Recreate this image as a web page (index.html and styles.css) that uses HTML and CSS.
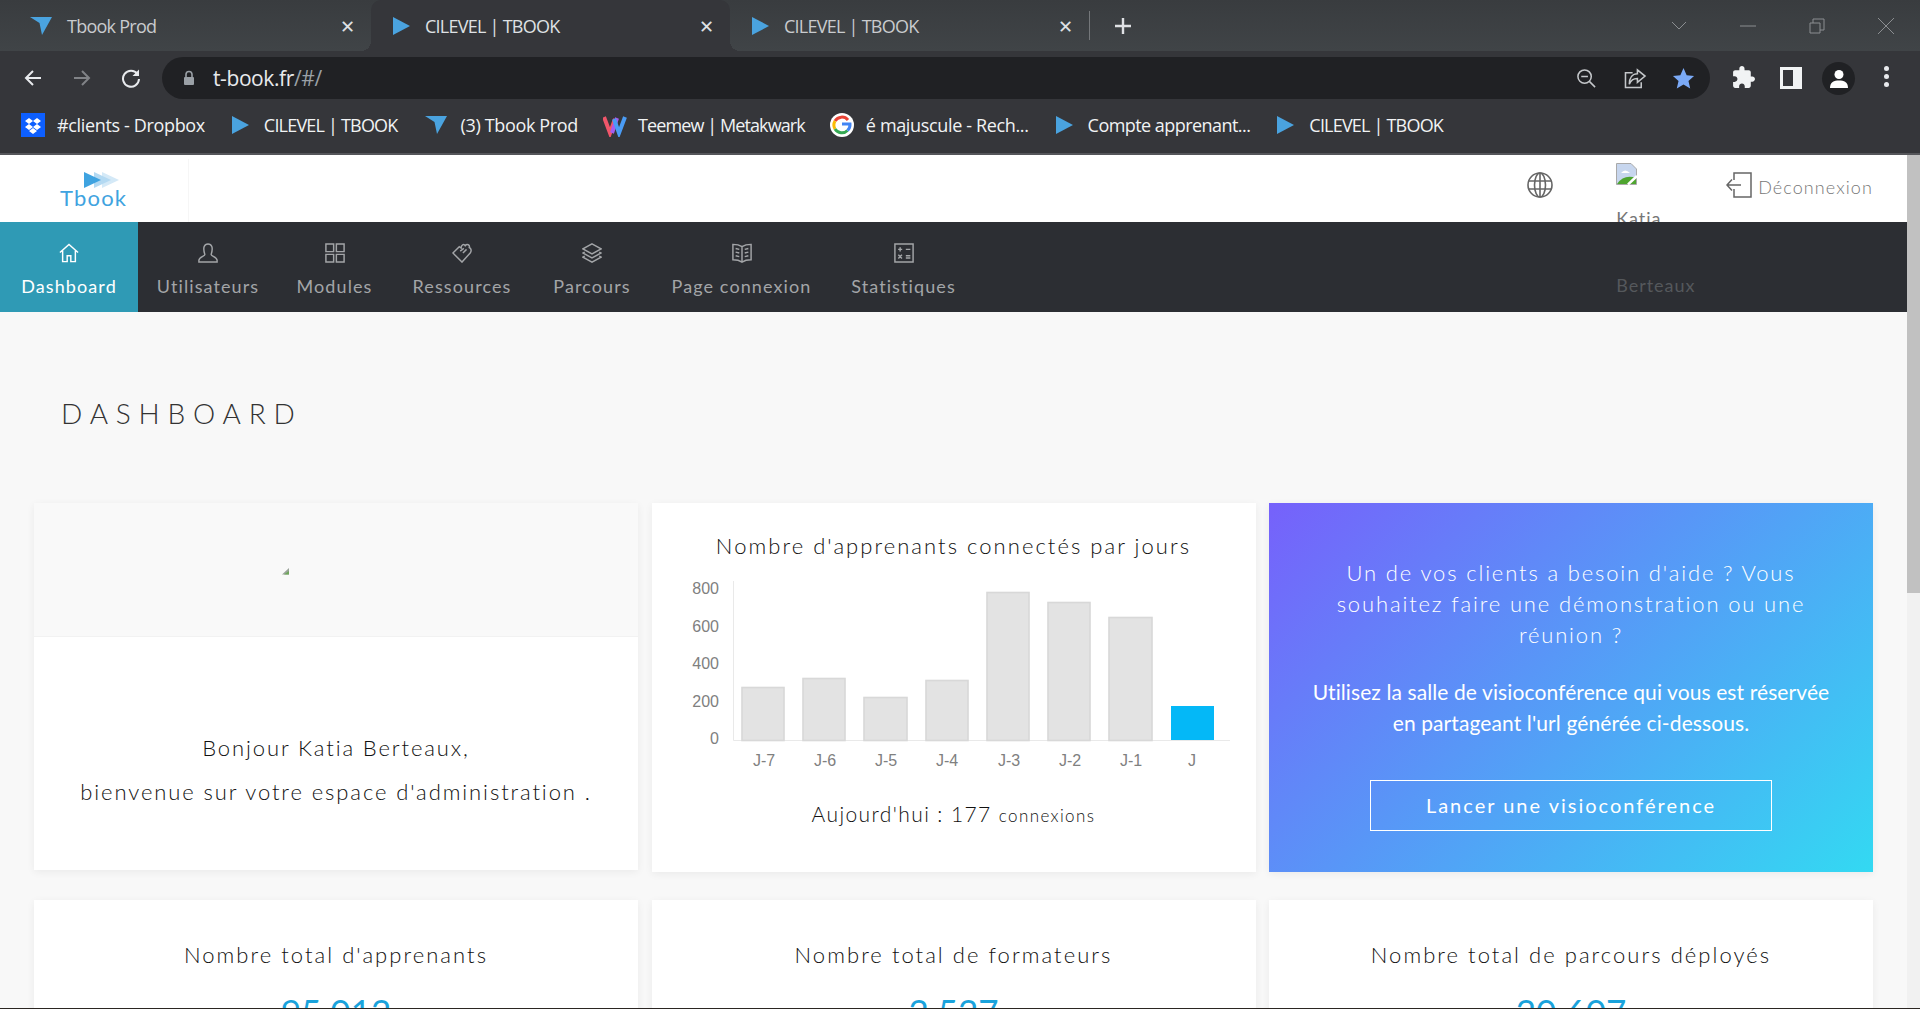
FILE: index.html
```html
<!DOCTYPE html>
<html lang="fr">
<head>
    <meta charset="UTF-8">
    <title>CILEVEL | TBOOK</title>
    <link rel="stylesheet" href="styles.css">
</head>
<body>
    <div class="tabstrip">
        <div class="tab">
            <svg class="fav-funnel" viewBox="0 0 22 18"><path d="M0 0 L22 0 L12 18 L9.500 6 Z"/></svg>
            <span class="tab-title">Tbook Prod</span>
            <span class="tab-close">&#x2715;</span>
        </div>
        <div class="tab tab-active">
            <svg class="fav-play" viewBox="0 0 17 18"><path d="M0 0 L17 9 L0 18 Z"/></svg>
            <span class="tab-title">CILEVEL | TBOOK</span>
            <span class="tab-close">&#x2715;</span>
        </div>
        <div class="tab">
            <svg class="fav-play" viewBox="0 0 17 18"><path d="M0 0 L17 9 L0 18 Z"/></svg>
            <span class="tab-title">CILEVEL | TBOOK</span>
            <span class="tab-close">&#x2715;</span>
        </div>
        <div class="tab-sep"></div>
        <svg class="tab-new" viewBox="0 0 18 18"><path d="M9 1 V17 M1 9 H17"/></svg>
        <div class="win-controls">
            <svg viewBox="0 0 16 16"><path d="M1 4 L8 11 L15 4"/></svg>
            <svg viewBox="0 0 16 16"><path d="M0 8 H16"/></svg>
            <svg viewBox="0 0 16 16"><path d="M1 5 H11 V15 H1 Z M4 5 V1 H15 V12 H11"/></svg>
            <svg viewBox="0 0 16 16"><path d="M0 0 L16 16 M16 0 L0 16"/></svg>
        </div>
    </div>

    <div class="toolbar">
        <svg class="tool-icon" viewBox="0 0 20 20"><path d="M18 10 H3 M10 3 L3 10 L10 17"/></svg>
        <svg class="tool-icon tool-off" viewBox="0 0 20 20"><path d="M2 10 H17 M10 3 L17 10 L10 17"/></svg>
        <svg class="tool-icon" viewBox="0 0 20 20"><path d="M16.500 6 A8 8 0 1 0 18 11"/><path class="filled" d="M18 1.500 V8 H11.500 Z"/></svg>
        <div class="omnibox">
            <svg class="lock" viewBox="0 0 12 16"><path d="M3 7 V4.500 A3 3 0 0 1 9 4.500 V7" /><rect x="1" y="7" width="10" height="8" rx="1"/></svg>
            <span class="url">t-book.fr<span class="url-path">/#/</span></span>
            <svg class="omni-icon zoom-out" viewBox="0 0 22 22"><circle cx="9" cy="9" r="7"/><path d="M14 14 L20 20 M5.500 9 H12.500"/></svg>
            <svg class="omni-icon share" viewBox="0 0 24 22"><path d="M9 5 H1.500 V20.500 H18 V15"/><path d="M14 2 L22 8.500 L14 15 V11 C9.500 11 7 13 5.500 17 C5.500 10 9 6 14 6 Z"/></svg>
            <svg class="omni-icon star" viewBox="0 0 24 24"><path d="M12 1 L15.300 8.600 L23 9.300 L17.200 14.600 L19 22.500 L12 18.300 L5 22.500 L6.800 14.600 L1 9.300 L8.700 8.600 Z"/></svg>
        </div>
        <svg class="ext-icon ext-puzzle" viewBox="0 0 24 24"><path d="M20.500 11H19V7c0-1.100-.9-2-2-2h-4V3.500C13 2.120 11.880 1 10.500 1S8 2.120 8 3.500V5H4c-1.100 0-1.990.9-1.990 2v3.800H3.500c1.490 0 2.700 1.210 2.700 2.700s-1.210 2.700-2.700 2.700H2V20c0 1.100.9 2 2 2h3.800v-1.500c0-1.490 1.210-2.700 2.700-2.700 1.490 0 2.700 1.210 2.700 2.700V22H17c1.100 0 2-.9 2-2v-4h1.500c1.380 0 2.500-1.120 2.500-2.500S21.880 11 20.500 11z"/></svg>
        <svg class="ext-icon" viewBox="0 0 22 22"><path fill-rule="evenodd" d="M0 0 H22 V22 H0 Z M3 3 V19 H13 V3 Z"/></svg>
        <div class="avatar">
            <svg viewBox="0 0 20 20"><circle cx="10" cy="5.500" r="4.500"/><path d="M1 19 C1 13 5 11.500 10 11.500 C15 11.500 19 13 19 19 Z"/></svg>
        </div>
        <div class="kebab"><i></i><i></i><i></i></div>
    </div>

    <div class="bookmarks">
        <div class="bookmark bm-wide">
            <svg class="bm-icon" viewBox="0 0 24 24"><rect width="24" height="24" fill="#0d5fff"/><path fill="#fff" d="M8 5 L12 8 L8 11 L4 8 Z M16 5 L20 8 L16 11 L12 8 Z M8 11 L12 14 L8 17 L4 14 Z M16 11 L20 14 L16 17 L12 14 Z M12 15 L16 18 L12 21 L8 18 Z"/></svg>
            #clients - Dropbox
        </div>
        <div class="bookmark bm-tight">
            <svg class="fav-play" viewBox="0 0 17 18"><path d="M0 0 L17 9 L0 18 Z"/></svg>
            CILEVEL | TBOOK
        </div>
        <div class="bookmark bm-wide">
            <svg class="fav-funnel" viewBox="0 0 22 18"><path d="M0 0 L22 0 L12 18 L9.500 6 Z"/></svg>
            (3) Tbook Prod
        </div>
        <div class="bookmark bm-teemew">
            <svg class="bm-icon" viewBox="0 0 24 24"><path d="M1 4 L7 20 L12 6" fill="none" stroke="#f0566a" stroke-width="4"/><path d="M9 20 L14 5" fill="none" stroke="#a45cf0" stroke-width="4"/><path d="M11 6 L16 20 L22 4" fill="none" stroke="#4a9cf5" stroke-width="4"/></svg>
            Teemew | Metakwark
        </div>
        <div class="bookmark bm-wide bm-google">
            <svg class="bm-icon" viewBox="0 0 24 24"><circle cx="12" cy="12" r="12" fill="#fff"/><path d="M18 7 A8 8 0 0 0 5 8" fill="none" stroke="#ea4335" stroke-width="3"/><path d="M5 8 A8 8 0 0 0 5 16" fill="none" stroke="#fbbc05" stroke-width="3"/><path d="M5 16 A8 8 0 0 0 17.500 17.500" fill="none" stroke="#34a853" stroke-width="3"/><path d="M17.500 17.500 A8 8 0 0 0 20 11 H12" fill="none" stroke="#4285f4" stroke-width="3"/></svg>
            é majuscule - Rech...
        </div>
        <div class="bookmark">
            <svg class="fav-play" viewBox="0 0 17 18"><path d="M0 0 L17 9 L0 18 Z"/></svg>
            Compte apprenant...
        </div>
        <div class="bookmark bm-tight">
            <svg class="fav-play" viewBox="0 0 17 18"><path d="M0 0 L17 9 L0 18 Z"/></svg>
            CILEVEL | TBOOK
        </div>
    </div>

    <div class="viewport">
        <div class="page">
            <header class="topbar">
                <div class="brand">
                    <svg class="brand-arrows" viewBox="0 0 36 16">
                        <path fill="#d4e9f7" d="M18 0 L35 8 L18 16 Z"/>
                        <path fill="#b3d9f2" d="M10 0 L27 8 L10 16 Z"/>
                        <path fill="#3fa3e0" d="M0 0 L17 8 L0 16 Z"/>
                    </svg>
                    <span class="brand-name">Tbook</span>
                </div>
                <div class="topbar-right">
                    <svg class="globe" viewBox="0 0 26 26"><circle cx="13" cy="13" r="12"/><ellipse cx="13" cy="13" rx="5.500" ry="12"/><path d="M13 1 V25 M2 9 H24 M2 17 H24"/></svg>
                    <div class="user">
                        <svg class="broken-img" viewBox="0 0 21 22"><path fill="#c7d6ee" stroke="#a9a9a9" d="M.5 .5 H15 L20.500 6 V21.500 H.5 Z"/><path fill="#fff" d="M5 10 Q9 5 14 10 Z"/><path fill="#4ea52f" d="M1 21 Q8 11 20 15 V21 Z"/><path stroke="#fff" stroke-width="2.500" d="M12 21.500 L21 13"/></svg>
                        <span class="user-first">Katia</span>
                        <span class="user-last">Berteaux</span>
                    </div>
                    <div class="logout">
                        <svg viewBox="0 0 26 26"><path d="M8 8 V1 H25 V25 H8 V17 M15 13 H1 M6 7.500 L1 13 L6 18.500"/></svg>
                        Déconnexion
                    </div>
                </div>
            </header>

            <nav class="mainnav">
                <a class="nav-item nav-active">
                    <svg viewBox="0 0 22 22"><path d="M1 10.500 L11 1.500 L21 10.500 M4 8.500 V20.500 H9 V14 H13 V20.500 H18 V8.500"/></svg>
                    Dashboard
                </a>
                <a class="nav-item">
                    <svg viewBox="0 0 22 22"><path d="M7.500 12.500 C5 5 7 1 11 1 C15 1 17 5 14.500 12.500 C14 14.500 21 15 21 19 V21 H1 V19 C1 15 8 14.500 7.500 12.500 Z"/></svg>
                    Utilisateurs
                </a>
                <a class="nav-item">
                    <svg viewBox="0 0 22 22"><path d="M1 1 H9.500 V9.500 H1 Z M12.500 1 H21 V9.500 H12.500 Z M1 12.500 H9.500 V21 H1 Z M12.500 12.500 H21 V21 H12.500 Z"/></svg>
                    Modules
                </a>
                <a class="nav-item">
                    <svg viewBox="0 0 22 22"><path d="M1 11 L8 4 L10 5.500 C10 2 13 0.500 14.500 3 C16.500 0.500 20 2 19 5 C21.500 6 21.500 9 20 11 L11 21 Z M9 9 L13 6 M12 11 L16 7"/></svg>
                    Ressources
                </a>
                <a class="nav-item">
                    <svg viewBox="0 0 22 22"><path d="M11 1 L21 6.500 L11 12 L1 6.500 Z M3 10 L1 11 L11 16.500 L21 11 L19 10 M3 14.500 L1 15.500 L11 21 L21 15.500 L19 14.500"/></svg>
                    Parcours
                </a>
                <a class="nav-item">
                    <svg viewBox="0 0 22 22"><path d="M11 4 C8 2 4 1.500 1 1.500 V18.500 C4 18.500 8 19 11 21 C14 19 18 18.500 21 18.500 V1.500 C18 1.500 14 2 11 4 Z M11 4 V21 M4 6 L8 7 M4 10 L8 11 M4 14 L8 15 M18 6 L14 7 M18 10 L14 11 M18 14 L14 15"/></svg>
                    Page connexion
                </a>
                <a class="nav-item">
                    <svg viewBox="0 0 22 22"><path d="M1 1 H21 V21 H1 Z M4.500 7 H9 M6.750 4.750 V9.250 M13 7 H18 M13 14 H18 M13 16.500 H18 M4.750 13 L8.750 17 M8.750 13 L4.750 17"/></svg>
                    Statistiques
                </a>
            </nav>

            <main class="content">
                <h1 class="page-title">DASHBOARD</h1>

                <div class="cards">
                    <section class="card card-welcome">
                        <div class="welcome-banner">
                            <svg class="welcome-img" viewBox="0 0 8 7"><path fill="#9aa39a" d="M7 0 V6.500 H0 Z"/><path fill="#6fa85a" d="M2 6.500 L7 3 V6.500 Z"/></svg>
                        </div>
                        <div class="welcome-text">
                            <p>Bonjour Katia Berteaux,</p>
                            <p>bienvenue sur votre espace d'administration .</p>
                        </div>
                    </section>

                    <section class="card card-chart">
                        <h2 class="card-title">Nombre d'apprenants connectés par jours</h2>
                        <svg class="chart" viewBox="0 0 604 200">
                            <path class="chart-axis" d="M81.500 11 V170.500 H578"/>
                            <g class="chart-y">
                                <text x="67" y="24">800</text>
                                <text x="67" y="62">600</text>
                                <text x="67" y="99">400</text>
                                <text x="67" y="137">200</text>
                                <text x="67" y="174">0</text>
                            </g>
                            <g class="chart-bar">
                                <rect x="90" y="117.500" width="42" height="53"/>
                                <rect x="151" y="108.500" width="42" height="62"/>
                                <rect x="212" y="127.500" width="43" height="43"/>
                                <rect x="274" y="110.500" width="42" height="60"/>
                                <rect x="335" y="22.500" width="42" height="148"/>
                                <rect x="396" y="32.500" width="42" height="138"/>
                                <rect x="457" y="47.500" width="43" height="123"/>
                            </g>
                            <rect class="chart-today" x="519" y="136" width="43" height="34"/>
                            <g class="chart-x">
                                <text x="112" y="196">J-7</text>
                                <text x="173" y="196">J-6</text>
                                <text x="234" y="196">J-5</text>
                                <text x="295" y="196">J-4</text>
                                <text x="357" y="196">J-3</text>
                                <text x="418" y="196">J-2</text>
                                <text x="479" y="196">J-1</text>
                                <text x="540" y="196">J</text>
                            </g>
                        </svg>
                        <p class="today">Aujourd'hui : 177 <small>connexions</small></p>
                    </section>

                    <section class="card card-visio">
                        <p class="visio-lead">Un de vos clients a besoin d'aide ? Vous souhaitez faire une démonstration ou une réunion ?</p>
                        <p class="visio-text">Utilisez la salle de visioconférence qui vous est réservée en partageant l'url générée ci-dessous.</p>
                        <a class="visio-btn">Lancer une visioconférence</a>
                    </section>

                    <section class="card card-stat">
                        <h2 class="card-title">Nombre total d'apprenants</h2>
                        <div class="stat-value">95 012</div>
                    </section>
                    <section class="card card-stat">
                        <h2 class="card-title">Nombre total de formateurs</h2>
                        <div class="stat-value">2 527</div>
                    </section>
                    <section class="card card-stat">
                        <h2 class="card-title">Nombre total de parcours déployés</h2>
                        <div class="stat-value">20 607</div>
                    </section>
                </div>
            </main>
        </div>
        <div class="scrollbar"><div class="scrollbar-thumb"></div></div>
    </div>
</body>
</html>
```

FILE: styles.css
```css
* {
    box-sizing: border-box;
}

html, body {
    height: 100%;
}

body {
    margin: 0;
    height: 1009px;
    overflow: hidden;
    display: flex;
    flex-direction: column;
    background-color: #35363a;
    border-bottom: 1px solid #2b2622;
    font-family: "Lato", "Liberation Sans", sans-serif;
}

/* browser chrome */
.tabstrip {
    height: 51px;
    flex: none;
    display: flex;
    align-items: center;
    background: linear-gradient(#393c3f, #404447);
    font-family: "Open Sans", sans-serif;
    color: #c9cbce;
}

.tab {
    width: 359px;
    height: 51px;
    display: flex;
    align-items: center;
    padding: 0 14px 0 22px;
    position: relative;
}

.tab:first-child {
    width: 371px;
    padding-left: 30px;
}

.tab-active {
    background-color: #35363a;
    border-radius: 10px 10px 0 0;
    color: #dfe1e4;
}

.tab-active::before,
.tab-active::after {
    content: "";
    position: absolute;
    bottom: 0;
    width: 10px;
    height: 10px;
}

.tab-active::before {
    left: -10px;
    background: radial-gradient(circle at 0 0, transparent 10px, #35363a 10px);
}

.tab-active::after {
    right: -10px;
    background: radial-gradient(circle at 100% 0, transparent 10px, #35363a 10px);
}

.tab-title {
    flex: 1;
    margin-left: 15px;
    font-size: 18px;
    letter-spacing: -0.75px;
}

.tab-close {
    font-size: 18px;
    color: #dfe1e4;
    width: 20px;
    text-align: center;
}

.fav-play {
    width: 17px;
    height: 18px;
    flex: none;
    fill: #4aa3df;
}

.fav-funnel {
    width: 22px;
    height: 18px;
    flex: none;
    fill: #4aa3df;
}

.tab-sep {
    width: 1px;
    height: 29px;
    background-color: #74777a;
}

.tab-new {
    width: 18px;
    height: 18px;
    margin-left: 24px;
    fill: none;
    stroke: #dfe1e4;
    stroke-width: 2.4;
}

.win-controls {
    margin-left: auto;
    display: flex;
    gap: 53px;
    padding-right: 26px;
}

.win-controls svg {
    width: 16px;
    height: 16px;
    fill: none;
    stroke: #8b8e91;
    stroke-width: 1;
}

.toolbar {
    height: 48px;
    flex: none;
    display: flex;
    align-items: flex-end;
    padding-left: 23px;
    background-color: #35363a;
}

.tool-icon {
    width: 20px;
    height: 20px;
    margin: 0 29px 11px 0;
    fill: none;
    stroke: #e8eaed;
    stroke-width: 2;
}

.tool-icon .filled {
    fill: #e8eaed;
    stroke: none;
}

.tool-off {
    stroke: #818387;
}

.omnibox {
    width: 1548px;
    height: 42px;
    margin-left: -8px;
    display: flex;
    align-items: center;
    padding: 0 15px 0 21px;
    background-color: #202124;
    border-radius: 21px;
}

.lock {
    width: 12px;
    height: 16px;
    fill: #9aa0a6;
    stroke: #9aa0a6;
    stroke-width: 0;
}

.lock path {
    fill: none;
    stroke-width: 1.6;
}

.url {
    margin-left: 18px;
    flex: 1;
    font-family: "Open Sans", sans-serif;
    font-size: 21px;
    letter-spacing: -0.4px;
    color: #e8eaed;
}

.url-path {
    color: #9aa0a6;
}

.omni-icon {
    fill: none;
    stroke: #c4c7ca;
    stroke-width: 1.6;
}

.zoom-out {
    width: 21px;
    height: 21px;
}

.share {
    width: 23px;
    height: 21px;
    margin-left: 27px;
}

.star {
    width: 23px;
    height: 23px;
    margin-left: 25px;
    fill: #7baaf7;
    stroke: none;
}

.ext-icon {
    width: 22px;
    height: 22px;
    margin: 0 20px 10px 0;
    fill: #f1f3f4;
}

.ext-puzzle {
    width: 25px;
    height: 25px;
    margin: 0 24px 9px 21px;
}

.avatar {
    width: 33px;
    height: 33px;
    margin: 0 0 4px 0;
    border-radius: 50%;
    background-color: #202124;
    display: flex;
    align-items: center;
    justify-content: center;
}

.avatar svg {
    width: 20px;
    height: 20px;
    fill: #fff;
}

.kebab {
    display: flex;
    flex-direction: column;
    gap: 3px;
    margin: 0 0 12px 29px;
}

.kebab i {
    width: 5px;
    height: 5px;
    border-radius: 50%;
    background-color: #e8eaed;
}

.bookmarks {
    height: 56px;
    flex: none;
    display: flex;
    align-items: center;
    gap: 27px;
    padding: 0 0 2px 21px;
    background-color: #35363a;
    border-bottom: 2px solid #55565a;
    font-family: "Open Sans", sans-serif;
    font-size: 18px;
    letter-spacing: -0.55px;
    color: #f1f3f4;
}

.bookmark {
    display: flex;
    align-items: center;
    gap: 12px;
    white-space: nowrap;
}

.bookmark .fav-play {
    margin-right: 3px;
}

.bookmark .fav-funnel {
    margin-right: 2px;
}

.bm-wide {
    letter-spacing: -0.35px;
}

.bm-tight {
    letter-spacing: -0.8px;
}

.bm-teemew {
    margin-left: -2px;
    gap: 11px;
    letter-spacing: -0.9px;
}

.bm-google {
    margin-left: -2px;
}

.bm-icon {
    width: 24px;
    height: 24px;
    flex: none;
}

/* the page */
.viewport {
    flex: 1;
    min-height: 0;
    display: flex;
    background-color: #f8f8f8;
}

.page {
    flex: 1;
    min-width: 0;
    overflow: hidden;
}

.scrollbar {
    width: 13px;
    background-color: #f1f1f1;
}

.scrollbar-thumb {
    height: 438px;
    background-color: #c1c1c1;
}

.topbar {
    height: 67px;
    display: flex;
    align-items: center;
    background-color: #fff;
    position: relative;
}

.brand {
    width: 189px;
    height: 63px;
    align-self: flex-end;
    padding: 13px 0 0 60px;
    border-right: 1px solid #f6f6f6;
    position: relative;
}

.brand-arrows {
    display: block;
    width: 36px;
    height: 16px;
    margin-left: 24px;
}

.brand-name {
    display: block;
    margin-top: -1px;
    font-size: 22px;
    line-height: 22px;
    letter-spacing: 1.2px;
    color: #3fa3e0;
}

.topbar-right {
    margin-left: auto;
    align-self: stretch;
    display: flex;
    align-items: center;
    padding: 0 34px 3px 0;
}

.globe {
    width: 26px;
    height: 26px;
    margin-bottom: 4px;
    fill: none;
    stroke: #666;
    stroke-width: 1.6;
}

.user {
    width: 110px;
    margin-left: 63px;
    align-self: flex-start;
    height: 67px;
    position: relative;
    font-size: 18px;
    color: #777;
}

.broken-img {
    position: absolute;
    left: 0;
    top: 8px;
    width: 21px;
    height: 22px;
}

.user-first {
    position: absolute;
    left: 0;
    top: 52px;
    line-height: 22px;
    letter-spacing: 1px;
    height: 15px;
    overflow: hidden;
}

.user-last {
    position: absolute;
    left: 0;
    top: 119px;
    z-index: 2;
    letter-spacing: 1px;
    color: #55585c;
}

.logout {
    display: flex;
    align-items: center;
    gap: 6px;
    font-size: 18px;
    font-weight: 300;
    letter-spacing: 1.1px;
    color: #777;
}

.logout svg {
    width: 26px;
    height: 26px;
    margin-bottom: 4px;
    fill: none;
    stroke: #666;
    stroke-width: 1.5;
}

.mainnav {
    height: 90px;
    display: grid;
    grid-template-columns: 138px 138px 113px 140px 118px 179px 143px;
    column-gap: 1px;
    background-color: #2c2e33;
}

.nav-item {
    padding-top: 21px;
    display: flex;
    flex-direction: column;
    align-items: center;
    gap: 12px;
    font-size: 18px;
    line-height: 22px;
    letter-spacing: 1.1px;
    color: #a3a5a8;
}

.nav-item svg {
    width: 20px;
    height: 20px;
    fill: none;
    stroke: #a3a5a8;
    stroke-width: 1.6;
}

.nav-active {
    background-color: #2f9ab5;
    color: #fff;
}

.nav-active svg {
    stroke: #fff;
}

.content {
    padding: 0 34px;
}

.page-title {
    margin: 0;
    padding: 82px 0 0 27px;
    height: 191px;
    font-size: 28px;
    line-height: 38px;
    font-weight: 300;
    letter-spacing: 7.8px;
    color: #333;
}

.cards {
    display: grid;
    grid-template-columns: repeat(3, 1fr);
    column-gap: 13.5px;
    row-gap: 28px;
}

.card {
    height: 369px;
    background-color: #fff;
    box-shadow: 0 2px 8px rgba(0, 0, 0, 0.06);
    text-align: center;
}

.card-title {
    margin: 0;
    font-size: 22px;
    line-height: 26px;
    font-weight: 300;
    letter-spacing: 2.05px;
    color: #111;
}

.card-welcome {
    height: 366.500px;
}

.welcome-banner {
    height: 134px;
    background-color: #f9f9f9;
    border-bottom: 1px solid #f2f2f2;
    padding: 65px 0 0 248px;
    text-align: left;
}

.welcome-img {
    display: block;
    width: 8px;
    height: 7px;
}

.welcome-text {
    padding-top: 89px;
    font-size: 22px;
    line-height: 44px;
    font-weight: 300;
    letter-spacing: 1.9px;
    color: #111;
}

.welcome-text p {
    margin: 0;
}

.card-chart {
    padding-top: 30px;
}

.chart {
    display: block;
    width: 604px;
    height: 200px;
    margin-top: 11px;
}

.chart-axis {
    fill: none;
    stroke: #e9e9e9;
    stroke-width: 1;
}

.chart-y text {
    font-family: "Liberation Sans", sans-serif;
    font-size: 16px;
    text-anchor: end;
    fill: #808080;
}

.chart-x text {
    font-family: "Liberation Sans", sans-serif;
    font-size: 16px;
    text-anchor: middle;
    fill: #808080;
}

.chart-bar rect {
    fill: #e3e3e3;
    stroke: #d8d8d8;
    stroke-width: 1.6;
}

.chart-today {
    fill: #04b8f7;
}

.today {
    margin: 31px 0 0;
    font-size: 21px;
    line-height: 26px;
    font-weight: 300;
    letter-spacing: 1.4px;
    color: #111;
}

.today small {
    font-size: 17px;
}

.card-visio {
    padding: 54px 40px 0;
    background: linear-gradient(135deg, #7661fb, #33d9f2);
    color: #fff;
}

.visio-lead {
    margin: 0;
    font-size: 22px;
    line-height: 31.200px;
    letter-spacing: 1.85px;
    font-weight: 300;
}

.visio-text {
    margin: 26.600px 0 0;
    font-size: 21px;
    line-height: 30.500px;
    letter-spacing: 0.1px;
}

.visio-btn {
    display: block;
    width: 402px;
    height: 51px;
    margin: 41.500px auto 0;
    border: 1px solid #fff;
    font-size: 20px;
    line-height: 49px;
    letter-spacing: 2px;
}

.card-stat {
    padding-top: 42px;
}

.stat-value {
    margin-top: 18px;
    font-size: 35px;
    line-height: 50px;
    color: #1aa3dc;
}
```
